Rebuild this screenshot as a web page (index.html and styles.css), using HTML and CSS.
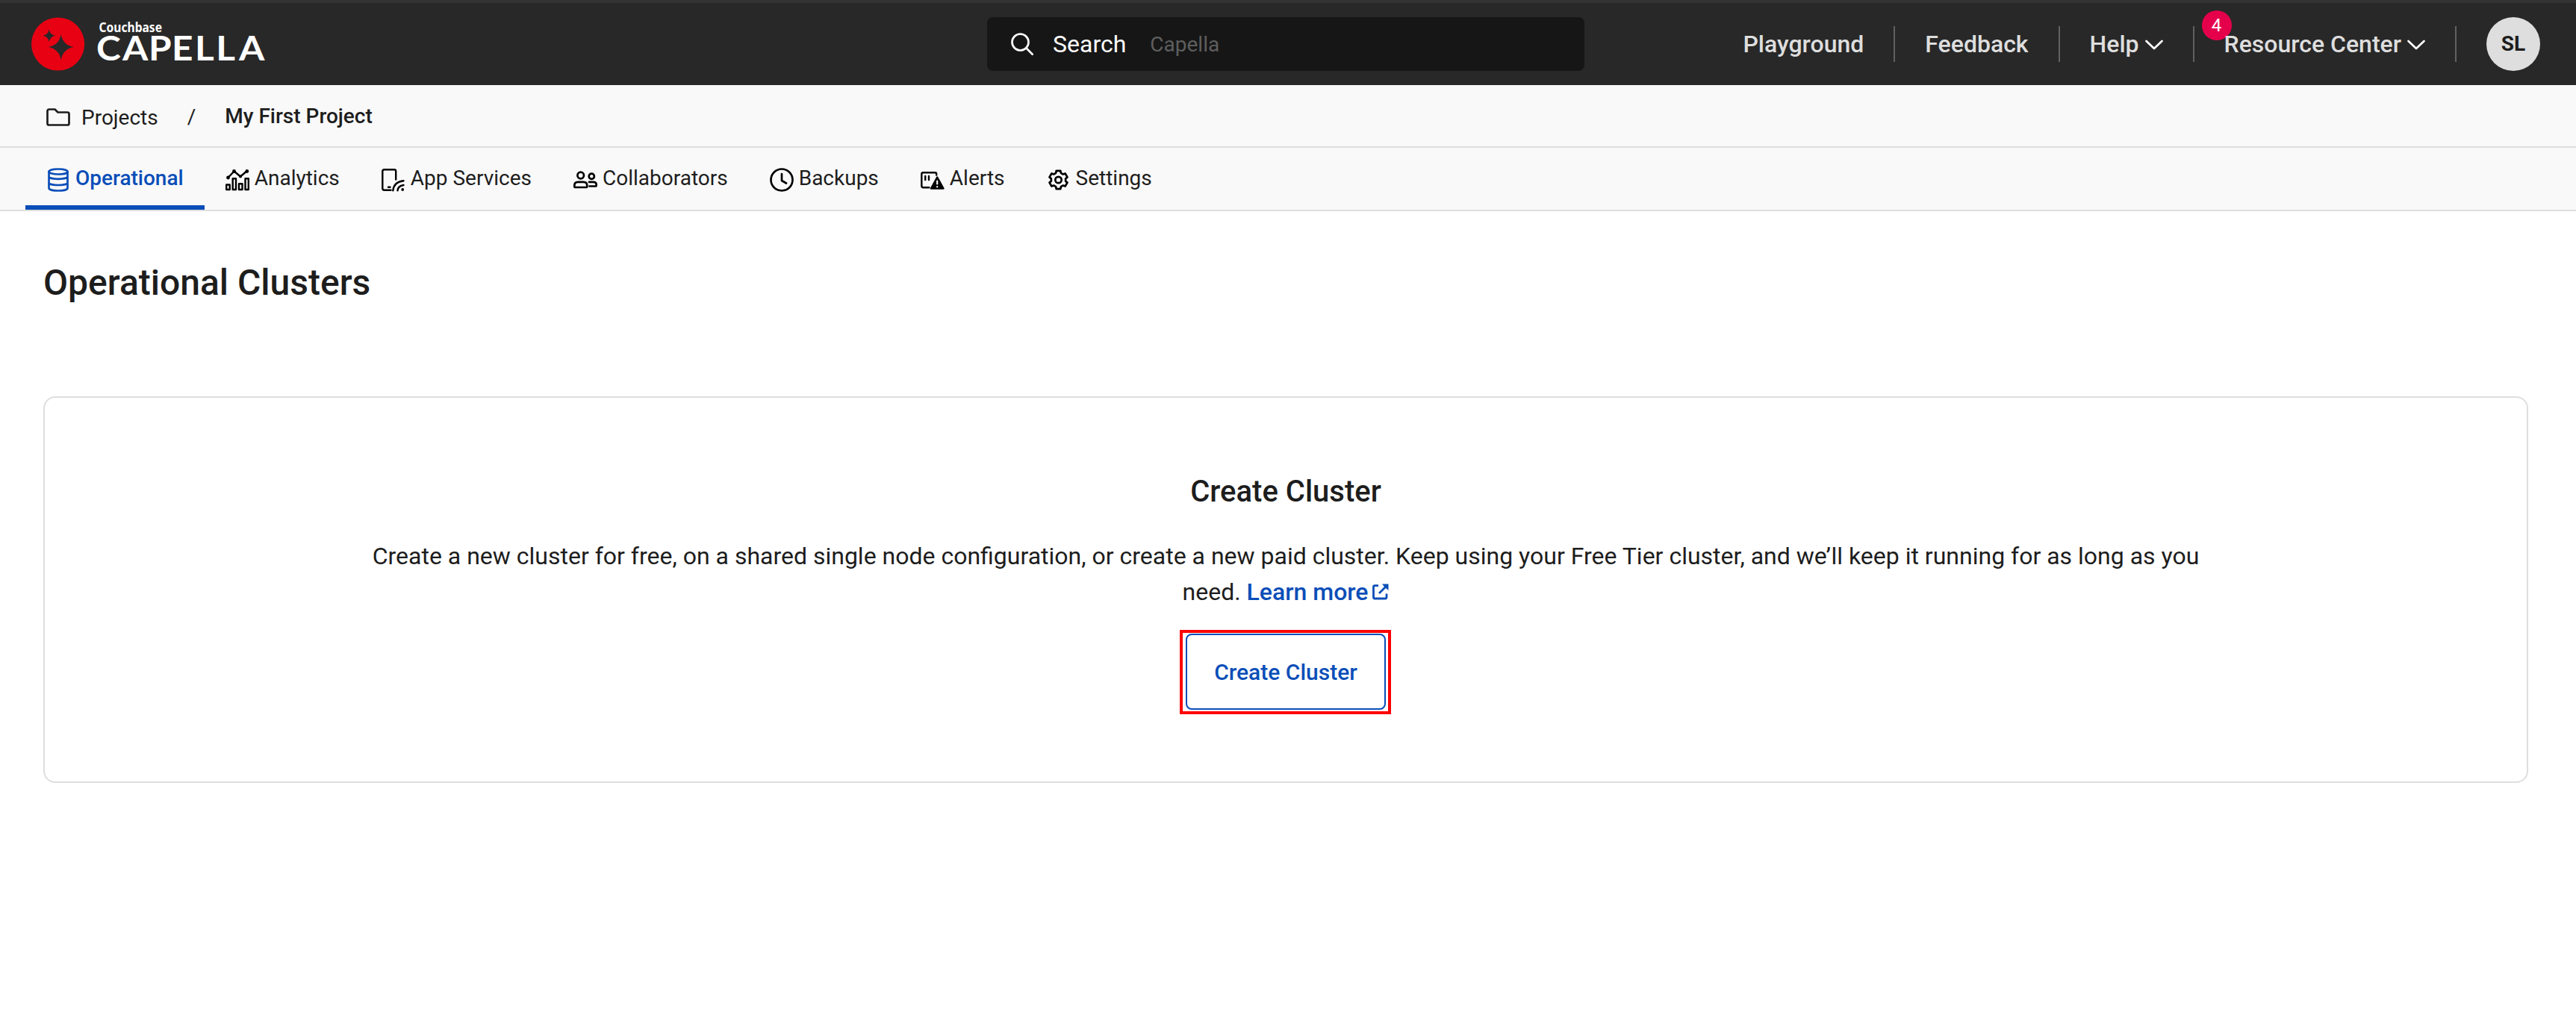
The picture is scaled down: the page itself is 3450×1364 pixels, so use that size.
FILE: index.html
```
<!DOCTYPE html>
<html lang="en">
<head>
<meta charset="utf-8">
<title>Operational Clusters</title>
<link rel="stylesheet" href="styles.css">
</head>
<body>
<header class="topbar">
  <a class="logo">
    <svg width="320" height="72" viewBox="0 0 320 72" role="img" aria-label="Couchbase Capella">
      <circle cx="35.6" cy="36" r="35.6" fill="#e80013"/>
      <path class="cut" d="M39.7 23Q42.2 37.500 57 40Q42.200 42.500 39.700 57.500Q37.200 42.500 22.500 40Q37.200 37.500 39.700 23Z"/>
      <path class="cut" d="M23.800 16.500Q25 23.500 32 24.800Q25 26 23.800 33.300Q22.500 26 15.500 24.800Q22.500 23.500 23.800 16.500Z"/>
      <text class="logo-small" x="90.500" y="20" textLength="84.500" lengthAdjust="spacingAndGlyphs">Couchbase</text>
      <text class="logo-big" transform="scale(1.1 1)" x="79 111 142.700 171 199.200 224.700 252.700" y="58.500">CAPELLA</text>
    </svg>
  </a>
  <div class="search">
    <svg width="30" height="30" viewBox="0 0 30 30" class="line white"><circle cx="12.500" cy="12.500" r="11"/><path d="M20.500 20.500L28.700 28.700"/></svg>
    <span class="search-label">Search</span>
    <span class="search-scope">Capella</span>
  </div>
  <nav class="links">
    <a class="link">Playground</a>
    <i class="divider"></i>
    <a class="link">Feedback</a>
    <i class="divider"></i>
    <a class="link">Help<svg class="chevron line white" width="24" height="14" viewBox="0 0 24 14"><path d="M1.500 2L12 12L22.500 2"/></svg></a>
    <i class="divider"></i>
    <a class="link"><b class="badge">4</b><span class="over">Resource Center</span><svg class="chevron line white" width="24" height="14" viewBox="0 0 24 14"><path d="M1.500 2L12 12L22.500 2"/></svg></a>
    <i class="divider"></i>
    <span class="avatar">SL</span>
  </nav>
</header>

<nav class="crumbs">
  <a class="crumb">
    <svg class="line" width="32" height="24" viewBox="0 0 32 24"><path d="M4 1.500H11.500L15.500 5.500H28.500Q30.500 5.500 30.500 7.500V20.500Q30.500 22.500 28.500 22.500H3.500Q1.500 22.500 1.500 20.500V4Q1.500 1.500 4 1.500Z"/></svg>
    Projects
  </a>
  <span class="slash">/</span>
  <span class="current">My First Project</span>
</nav>

<nav class="tabs">
  <a class="tab active">
    <svg class="icon line" viewBox="0 0 32 32"><ellipse cx="16" cy="5" rx="12.500" ry="3.500"/><path d="M3.500 5V27C3.500 29 9 30.500 16 30.500S28.500 29 28.500 27V5M3.500 11.500C3.500 13.500 9 14.800 16 14.800S28.500 13.500 28.500 11.500M3.500 19.700C3.500 21.700 9 23 16 23S28.500 21.700 28.500 19.700"/></svg>
    Operational
  </a>
  <a class="tab">
    <svg class="icon line thin" viewBox="0 0 32 32"><path d="M3.500 13L11.500 4.500L20 11.500L28.800 4"/><g class="dot"><circle cx="3.500" cy="13" r="2.400"/><circle cx="11.500" cy="4.500" r="2.400"/><circle cx="20" cy="11.500" r="2"/><circle cx="28.800" cy="4.500" r="2.400"/></g><path d="M1.200 22.500H5.700V29H1.200ZM9.700 14.200H14V29H9.700ZM18 21.200H22.500V29H18ZM26.500 14.200H30.800V29H26.500Z"/></svg>
    Analytics
  </a>
  <a class="tab">
    <svg class="icon line thin" viewBox="0 0 32 32"><path d="M12.500 29.700H3.500Q1.300 29.700 1.300 27.500V4.500Q1.300 2.300 3.500 2.300H17Q19.200 2.300 19.200 4.500V15.500M9 25.700H11.500M15.300 30.300Q16.500 18.500 29.500 17.200M21.500 30.300Q22 24 29.500 23"/><circle class="dot" cx="28.200" cy="29" r="1.900"/></svg>
    App Services
  </a>
  <a class="tab">
    <svg class="icon line" viewBox="0 0 32 32"><circle cx="9.700" cy="10" r="4.300"/><circle cx="24.300" cy="11.300" r="3.600"/><path d="M6 18.800H13.500Q18.300 18.800 18.300 23.500V24.500Q18.300 26 16.800 26H2.800Q1.300 26 1.300 24.500V23.500Q1.300 18.800 6 18.800ZM21 18.800H26.500Q30.700 18.800 30.700 22.500V23Q30.700 24.500 29.500 24.500H21.500"/></svg>
    Collaborators
  </a>
  <a class="tab">
    <svg class="icon line" viewBox="0 0 32 32"><circle cx="16" cy="16" r="14.500"/><path d="M16 8V17L22 20.500"/></svg>
    Backups
  </a>
  <a class="tab">
    <svg class="icon line thin" viewBox="0 0 32 32"><path d="M11.500 26.200H3.500Q1.300 26.200 1.300 24V8.300Q1.300 6.200 3.500 6.200H19.500Q21.200 6.200 21.200 8V9.500M6.200 11V16M11 11V16"/><path class="solid" d="M22.200 12.500L30.500 27.500H14Z"/><path class="hole" d="M22.200 17.500V21.500M22.200 25V25.400"/></svg>
    Alerts
  </a>
  <a class="tab">
    <svg class="icon line" viewBox="-15.500 -16 32 32"><circle r="4.200"/><path d="M-2.800-12.200H2.800L3.350-9.200L6.300-7.500L9.100-8.500L12-3.650L9.650-1.700V1.700L12 3.650L9.100 8.500L6.300 7.500L3.350 9.200L2.800 12.200H-2.800L-3.350 9.200L-6.300 7.500L-9.100 8.500L-12 3.650L-9.650 1.700V-1.700L-12-3.650L-9.100-8.500L-6.300-7.500L-3.350-9.200Z"/></svg>
    Settings
  </a>
</nav>

<main class="content">
  <h1 class="title">Operational Clusters</h1>
  <section class="card">
    <h2 class="card-title">Create Cluster</h2>
    <p class="card-text">Create a new cluster for free, on a shared single node configuration, or create a new paid cluster. Keep using your Free Tier cluster, and we’ll keep it running for as long as you need. <a class="more">Learn more<svg class="external" width="22" height="22" viewBox="0 0 22 22"><path d="M8 2.700H3.200Q1.500 2.700 1.500 4.400V18.300Q1.500 20 3.200 20H17.300Q19 20 19 18.300V13.500M9 13L19 3"/><path class="tip" d="M13 0.500H21.500V9L18.500 6.500L15.500 3.500Z"/></svg></a></p>
    <div class="highlight"><button class="create">Create Cluster</button></div>
  </section>
</main>
</body>
</html>
```
FILE: styles.css
```
* { box-sizing: border-box; }

body {
  margin: 0;
  background: #fff;
  color: #1d1d1d;
  font-family: Roboto, "Liberation Sans", sans-serif;
  font-size: 28px;
}

svg { display: block; flex: none; overflow: visible; }

.line {
  fill: none;
  stroke: currentColor;
  stroke-width: 2.7;
  stroke-linecap: round;
  stroke-linejoin: round;
}
.thin { stroke-width: 2.4; }
.white { color: #fff; }
.solid { fill: currentColor; }
.dot { fill: currentColor; stroke: none; }

/* Top bar */
.topbar {
  display: grid;
  grid-template-columns: 1fr 800px 1fr;
  align-items: center;
  height: 114px;
  padding: 0 48px 0 42px;
  border-top: 4px solid #333;
  background: #282828;
}
.cut { fill: #282828; }
.logo-small { font: 700 18px "Noto Sans", sans-serif; fill: #fff; }
.logo-big { font: 700 45px Lato, sans-serif; fill: #fff; }

.search {
  display: flex;
  align-items: center;
  height: 72px;
  padding: 0 32px;
  border-radius: 8px;
  background: #161616;
}
.search-label { margin-left: 26px; color: #fff; font-size: 32px; font-weight: 400; }
.search-scope { margin-left: 32px; color: #5e5e5e; }

.links { display: flex; align-items: center; justify-content: flex-end; gap: 40px; }
.link {
  position: relative;
  display: flex;
  align-items: center;
  color: #dedede;
  font-size: 32px;
  font-weight: 500;
  line-height: 48px;
}
.chevron { margin: 2px 0 0 8px; }
.divider { width: 2px; height: 48px; background: #616161; }
.badge {
  position: absolute;
  left: -30px;
  top: -21px;
  width: 40px;
  height: 40px;
  border-radius: 50%;
  background: #e5004c;
  color: #fff;
  font-size: 24px;
  font-weight: 400;
  line-height: 40px;
  text-align: center;
}
.over { position: relative; }
.avatar {
  width: 72px;
  height: 72px;
  border-radius: 50%;
  background: #dedede;
  color: #1d1d1d;
  font-weight: 700;
  line-height: 72px;
  text-align: center;
}

/* Breadcrumbs */
.crumbs {
  display: flex;
  align-items: center;
  height: 84px;
  padding-left: 62px;
  border-bottom: 2px solid #dedede;
  background: #f9f9f9;
}
.crumb { display: flex; align-items: center; gap: 15px; padding-top: 4px; }
.slash { margin: 2px 39px 0 39px; }
.current { font-weight: 500; }

/* Tabs */
.tabs {
  display: flex;
  height: 85px;
  padding-left: 34px;
  border-bottom: 2px solid #dedede;
  background: #f9f9f9;
}
.tab {
  display: flex;
  align-items: center;
  gap: 7px;
  height: 83px;
  padding: 0 28px 3px;
}
.tab .icon { width: 32px; height: 32px; margin-top: 6px; color: #000; }
.tab.active { border-bottom: 6px solid #0a4eb8; padding-top: 3px; padding-bottom: 0; color: #0a4eb8; font-weight: 500; }
.tab.active .icon { color: #0a4eb8; }
.hole { stroke: #f9f9f9; stroke-width: 2.2; }

/* Page content */
.content { padding: 68px 64px 0 58px; }
.title { margin: 0 0 124px; font-size: 48px; font-weight: 500; line-height: 56px; }
.card {
  display: flex;
  flex-direction: column;
  align-items: center;
  height: 518px;
  padding-top: 102px;
  border: 2px solid #dedede;
  border-radius: 16px;
}
.card-title { margin: 0; font-size: 40px; font-weight: 500; line-height: 48px; }
.card-text {
  width: 2496px;
  margin: 38px 0 27px;
  font-size: 32px;
  line-height: 48px;
  text-align: center;
}
.more { color: #0a4eb8; font-weight: 500; white-space: nowrap; }
.external {
  display: inline-block;
  margin-left: 6px;
  fill: none;
  stroke: currentColor;
  stroke-width: 2.8;
}
.tip { fill: currentColor; stroke: none; }
.highlight {
  margin-right: 1px;
  padding: 1px 3px 2px 4px;
  border: 4px solid #f00;
}
.create {
  display: block;
  width: 268px;
  height: 102px;
  padding: 0;
  border: 2px solid #0a4eb8;
  border-radius: 8px;
  background: #fff;
  color: #0a4eb8;
  font: 500 30px Roboto, sans-serif;
}
```
